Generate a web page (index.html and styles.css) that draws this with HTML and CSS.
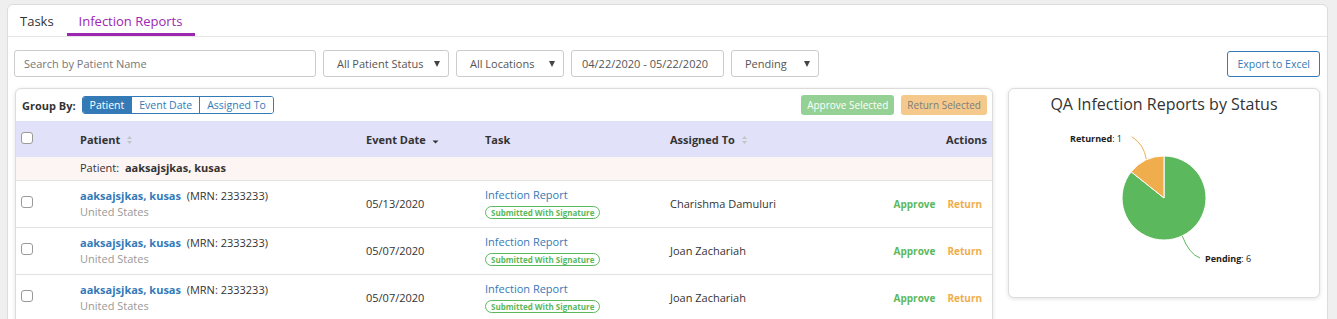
FILE: index.html
```html
<!DOCTYPE html>
<html lang="en">
<head>
    <meta charset="UTF-8">
    <meta name="viewport" content="width=device-width, initial-scale=1.0">
    <title>Infection Reports</title>
    <link rel="stylesheet" href="styles.css">
</head>
<body>
    <div class="page">
        <nav class="tabs">
            <a class="tab">Tasks</a>
            <a class="tab active">Infection Reports</a>
        </nav>

        <div class="content">
            <div class="filters">
                <input class="field search" type="text" placeholder="Search by Patient Name">
                <div class="field dropdown status">All Patient Status</div>
                <div class="field dropdown locations">All Locations</div>
                <div class="field dates">04/22/2020 - 05/22/2020</div>
                <div class="field dropdown state">Pending</div>
                <button class="export">Export to Excel</button>
            </div>

            <div class="main">
                <section class="card table-card">
                    <div class="toolbar">
                        <span class="group-label">Group By:</span>
                        <div class="btn-group">
                            <button class="on">Patient</button>
                            <button>Event Date</button>
                            <button>Assigned To</button>
                        </div>
                        <div class="bulk">
                            <button class="bulk-approve">Approve Selected</button>
                            <button class="bulk-return">Return Selected</button>
                        </div>
                    </div>

                    <table class="reports">
                        <colgroup>
                            <col style="width: 59px">
                            <col style="width: 286px">
                            <col style="width: 119px">
                            <col style="width: 185px">
                            <col style="width: 200px">
                            <col>
                        </colgroup>
                        <thead>
                            <tr>
                                <th><input class="check" type="checkbox"></th>
                                <th>Patient<svg class="sort" width="7" height="10" viewBox="0 0 7 10"><path d="M3.5 1 L6 4 L1 4 Z M1 6 L6 6 L3.5 9 Z" fill="#c4c4c4"/></svg></th>
                                <th>Event Date<svg class="sort" width="7" height="10" viewBox="0 0 7 10"><path d="M0.5 5.5 L6.5 5.5 L3.5 8.5 Z" fill="#333"/></svg></th>
                                <th>Task</th>
                                <th>Assigned To<svg class="sort" width="7" height="10" viewBox="0 0 7 10"><path d="M3.5 1 L6 4 L1 4 Z M1 6 L6 6 L3.5 9 Z" fill="#c4c4c4"/></svg></th>
                                <th class="right">Actions</th>
                            </tr>
                        </thead>
                        <tbody>
                            <tr class="group-row">
                                <td></td>
                                <td colspan="5">Patient:&nbsp; <b>aaksajsjkas, kusas</b></td>
                            </tr>
                            <tr>
                                <td><input class="check" type="checkbox"></td>
                                <td>
                                    <a class="name">aaksajsjkas, kusas</a>&nbsp; (MRN: 2333233)
                                    <div class="country">United States</div>
                                </td>
                                <td>05/13/2020</td>
                                <td>
                                    <a class="task">Infection Report</a>
                                    <div><span class="badge">Submitted With Signature</span></div>
                                </td>
                                <td>Charishma Damuluri</td>
                                <td class="right"><a class="act approve">Approve</a><a class="act return">Return</a></td>
                            </tr>
                            <tr>
                                <td><input class="check" type="checkbox"></td>
                                <td>
                                    <a class="name">aaksajsjkas, kusas</a>&nbsp; (MRN: 2333233)
                                    <div class="country">United States</div>
                                </td>
                                <td>05/07/2020</td>
                                <td>
                                    <a class="task">Infection Report</a>
                                    <div><span class="badge">Submitted With Signature</span></div>
                                </td>
                                <td>Joan Zachariah</td>
                                <td class="right"><a class="act approve">Approve</a><a class="act return">Return</a></td>
                            </tr>
                            <tr>
                                <td><input class="check" type="checkbox"></td>
                                <td>
                                    <a class="name">aaksajsjkas, kusas</a>&nbsp; (MRN: 2333233)
                                    <div class="country">United States</div>
                                </td>
                                <td>05/07/2020</td>
                                <td>
                                    <a class="task">Infection Report</a>
                                    <div><span class="badge">Submitted With Signature</span></div>
                                </td>
                                <td>Joan Zachariah</td>
                                <td class="right"><a class="act approve">Approve</a><a class="act return">Return</a></td>
                            </tr>
                        </tbody>
                    </table>
                </section>

                <section class="card chart-card">
                    <h2 class="chart-title">QA Infection Reports by Status</h2>
                    <svg class="pie" width="310" height="183" viewBox="0 0 310 183">
                        <path d="M122.7 22.7 Q135 30 137.5 46" fill="none" stroke="#f0ad4e" stroke-width="1"/>
                        <path d="M173.2 121.8 Q180 140 191 144" fill="none" stroke="#5cb85c" stroke-width="1"/>
                        <path d="M155 84 L122.2 57.8 A42 42 0 1 0 155 42 Z" fill="#5cb85c" stroke="#fff" stroke-width="1"/>
                        <path d="M155 84 L155 42 A42 42 0 0 0 122.2 57.8 Z" fill="#f0ad4e" stroke="#fff" stroke-width="1"/>
                        <text class="pie-label" x="113" y="28" text-anchor="end"><tspan font-weight="700">Returned</tspan>: 1</text>
                        <text class="pie-label" x="196" y="148"><tspan font-weight="700">Pending</tspan>: 6</text>
                    </svg>
                </section>
            </div>
        </div>
    </div>
</body>
</html>
```

FILE: styles.css
```css
* {
    box-sizing: border-box;
}

body {
    margin: 0;
    height: 319px;
    overflow: hidden;
    background-color: #efefef;
    font-family: "Open Sans", sans-serif;
    font-size: 11px;
    color: #333;
}

.page {
    margin: 4px 9px 0 7px;
    min-height: 400px;
    background-color: white;
    border: 1px solid #dcdcdc;
    border-radius: 6px;
}

/* tabs */
.tabs {
    display: flex;
    border-bottom: 1px solid #e6e6e6;
}

.tab {
    padding: 7px 13px 3px 12px;
    font-size: 13px;
    line-height: 18px;
    color: #333;
    border-bottom: 3px solid transparent;
}

.tab.active {
    color: #9c27b0;
    border-bottom-color: #9c27b0;
}

.content {
    padding: 13px 7px 0;
}

/* filter bar */
.filters {
    display: flex;
    gap: 7px;
    align-items: center;
}

.field {
    height: 27px;
    border: 1px solid #ccc;
    border-radius: 3px;
    font-family: inherit;
    font-size: 11px;
    line-height: 25px;
    color: #555;
    background-color: white;
}

.search {
    width: 302px;
    margin-left: -1px;
    padding: 0 9px;
    outline: none;
}

.search::placeholder {
    color: #777;
}

.dropdown {
    position: relative;
    padding-left: 13px;
}

.dropdown::after {
    content: "";
    position: absolute;
    right: 8px;
    top: 10px;
    border-left: 3px solid transparent;
    border-right: 3px solid transparent;
    border-top: 6px solid #444;
}

.status { width: 126px; }
.locations { width: 108px; }
.state { width: 88px; }

.dates {
    width: 153px;
    padding-left: 10px;
}

.export {
    margin-left: auto;
    height: 26px;
    padding: 0 9px;
    font-family: inherit;
    font-size: 10.5px;
    color: #337ab7;
    background-color: white;
    border: 1px solid #337ab7;
    border-radius: 3px;
}

/* cards */
.main {
    display: flex;
    gap: 15px;
    margin-top: 11px;
    align-items: flex-start;
}

.card {
    background-color: white;
    border: 1px solid #dcdcdc;
    border-radius: 6px;
    box-shadow: 0 1px 4px rgba(0, 0, 0, 0.12);
}

.table-card {
    flex: 1;
    min-height: 260px;
    overflow: hidden;
}

.toolbar {
    display: flex;
    align-items: center;
    height: 32px;
    padding: 0 5px 0 6px;
}

.group-label {
    font-weight: 700;
    margin-right: 6px;
}

.btn-group {
    display: flex;
    border: 1px solid #337ab7;
    border-radius: 3px;
    overflow: hidden;
}

.btn-group button {
    height: 16px;
    padding: 0 7px;
    font-family: inherit;
    font-size: 10.5px;
    line-height: 16px;
    color: #337ab7;
    background-color: white;
    border: none;
    border-left: 1px solid #337ab7;
}

.btn-group button:first-child {
    border-left: none;
}

.btn-group button.on {
    color: white;
    background-color: #337ab7;
}

.bulk {
    display: flex;
    gap: 7px;
    margin-left: auto;
}

.bulk button {
    height: 20px;
    padding: 0 6px;
    font-family: inherit;
    font-size: 10px;
    border: none;
    border-radius: 3px;
}

.bulk-approve {
    color: white;
    background-color: #95d195;
}

.bulk-return {
    color: #7c7c7c;
    background-color: #f5c98c;
}

/* table */
.reports {
    width: 100%;
    border-collapse: collapse;
    table-layout: fixed;
}

.reports th,
.reports td {
    padding: 0 5px;
    text-align: left;
    vertical-align: middle;
}

.reports th {
    height: 36px;
    font-weight: 700;
    background-color: #e1e1f9;
}

.reports td {
    height: 47px;
    border-top: 1px solid #e2e2e2;
    line-height: 16px;
}

.reports .right {
    text-align: right;
}

.reports .group-row td {
    height: 23px;
    border-top: none;
    background-color: #fdf5f4;
}

.sort {
    margin-left: 6px;
    vertical-align: -1px;
}

.check {
    appearance: none;
    width: 12px;
    height: 12px;
    margin: 0 0 4px;
    vertical-align: middle;
    border: 1px solid #9a9a9a;
    border-radius: 3px;
    background-color: white;
}

.name {
    font-weight: 700;
    color: #337ab7;
}

.country {
    color: #999;
}

.task {
    color: #337ab7;
}

.badge {
    display: inline-block;
    margin-top: 3px;
    padding: 0 5px;
    font-size: 8px;
    font-weight: 700;
    line-height: 11px;
    color: #5cb85c;
    border: 1px solid #5cb85c;
    border-radius: 7px;
}

.act {
    padding: 0 5px;
    margin-left: 2px;
    font-size: 10px;
    font-weight: 700;
}

.approve { color: #5cb85c; }
.return { color: #f0ad4e; }

/* chart */
.chart-card {
    flex: 0 0 312px;
    height: 210px;
}

.chart-title {
    margin: 0;
    padding-top: 5px;
    font-size: 16px;
    font-weight: 400;
    line-height: 20px;
    text-align: center;
    color: #333;
}

.pie {
    display: block;
}

.pie-label {
    font-family: "Open Sans", sans-serif;
    font-size: 9px;
    fill: #222;
}
```
